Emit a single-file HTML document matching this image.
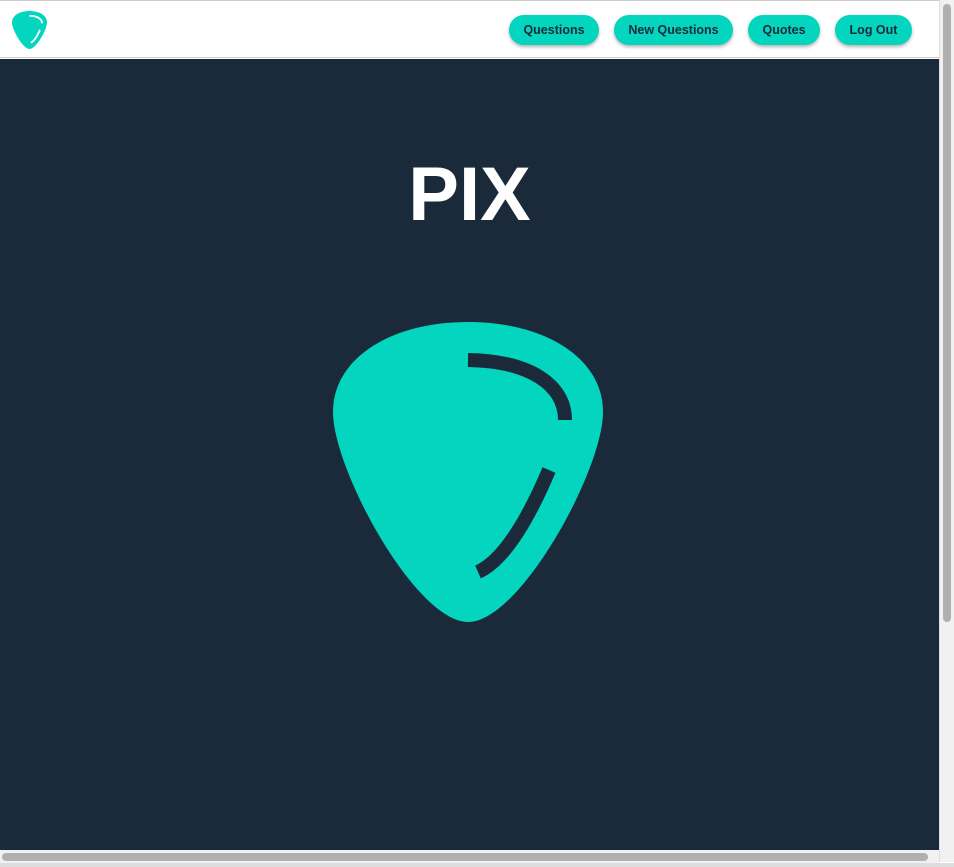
<!DOCTYPE html>
<html><head><style>
html,body{margin:0;padding:0;width:954px;height:867px;overflow:hidden;background:#fff;font-family:"Liberation Sans",Arial,sans-serif}
.hdr{position:absolute;left:0;top:0;width:939px;height:58px;background:#fff;border-top:1px solid #ccc;border-bottom:1px solid #ccc;box-sizing:border-box}
.main{position:absolute;left:0;top:59px;width:939px;height:791px;background:#1a2a3a}
.btn{position:absolute;top:14px;height:30px;border-radius:15px;background:#03d5bf;color:#1b2a38;font-weight:bold;font-size:12.5px;line-height:30px;text-align:center;box-shadow:0 2px 3px rgba(0,0,0,.3)}
h1{position:absolute;left:0;width:939px;top:150px;margin:0;text-align:center;color:#fff;font-size:76px;font-weight:bold;line-height:90px}
.vs{position:absolute;left:939px;top:0;width:15px;height:862px;background:#f1f1f1;border-left:1px solid #ddd}
.vt{position:absolute;left:943px;top:4px;width:8px;height:618px;border-radius:4px;background:#b0b0b0}
.hs{position:absolute;left:0;top:850px;width:939px;height:13px;background:#f1f1f1}
.ht{position:absolute;left:2px;top:853px;width:926px;height:8px;border-radius:4px;background:#b0b0b0}
.bot{position:absolute;left:0;top:863px;width:954px;height:4px;background:#ddd}
</style></head><body>
<div class="hdr">
<svg style="position:absolute;left:12px;top:10px" width="35" height="38" viewBox="333 322 270 300" preserveAspectRatio="none">
<path d="M468,322 C545,322 603,358 603,412 C603,470 520,622 468,622 C416,622 333,470 333,412 C333,358 391,322 468,322Z" fill="#03d5bf"/>
<path d="M468,360 C530,361 565,385 565,420" stroke="#fff" stroke-width="14" fill="none"/>
<path d="M549,470 C530,515 505,560 478,572" stroke="#fff" stroke-width="14" fill="none"/>
</svg>
<div class="btn" style="left:509px;width:90px">Questions</div>
<div class="btn" style="left:614px;width:119px">New Questions</div>
<div class="btn" style="left:748px;width:72px">Quotes</div>
<div class="btn" style="left:835px;width:77px">Log Out</div>
</div>
<div class="main"></div>
<h1>PIX</h1>
<svg style="position:absolute;left:0;top:0" width="939" height="850">
<path d="M468,322 C545,322 603,358 603,412 C603,470 520,622 468,622 C416,622 333,470 333,412 C333,358 391,322 468,322Z" fill="#03d5bf"/>
<path d="M468,360 C530,361 565,385 565,420" stroke="#1a2a3a" stroke-width="14" fill="none"/>
<path d="M549,470 C530,515 505,560 478,572" stroke="#1a2a3a" stroke-width="14" fill="none"/>
</svg>
<div class="vs"></div><div class="vt"></div>
<div class="hs"></div><div class="ht"></div>
<div class="bot"></div>
</body></html>
